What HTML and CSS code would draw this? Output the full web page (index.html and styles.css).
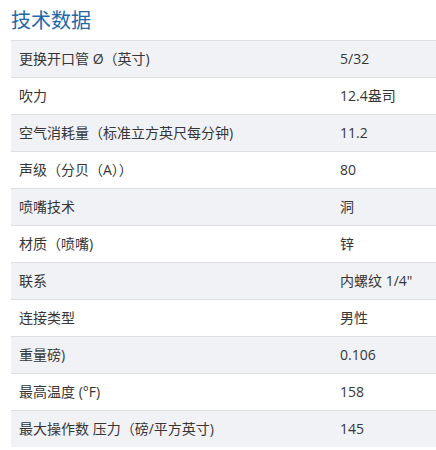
FILE: index.html
```html
<!DOCTYPE html>
<html lang="zh">
<head>
<meta charset="utf-8">
<link rel="stylesheet" href="styles.css">
</head>
<body>
<div class="wrap">
  <h2 class="title">技术数据</h2>
  <table class="specs">
    <tbody>
      <tr><td class="k">更换开口管 Ø（英寸)</td><td class="v">5/32</td></tr>
      <tr><td class="k">吹力</td><td class="v">12.4盎司</td></tr>
      <tr><td class="k">空气消耗量（标准立方英尺每分钟)</td><td class="v">11.2</td></tr>
      <tr><td class="k">声级（分贝（A））</td><td class="v">80</td></tr>
      <tr><td class="k">喷嘴技术</td><td class="v">洞</td></tr>
      <tr><td class="k">材质（喷嘴)</td><td class="v">锌</td></tr>
      <tr><td class="k">联系</td><td class="v">内螺纹 1/4"</td></tr>
      <tr><td class="k">连接类型</td><td class="v">男性</td></tr>
      <tr><td class="k">重量磅)</td><td class="v">0.106</td></tr>
      <tr><td class="k">最高温度 (°F)</td><td class="v">158</td></tr>
      <tr><td class="k">最大操作数 压力（磅/平方英寸)</td><td class="v">145</td></tr>
    </tbody>
  </table>
</div>
</body>
</html>
```
FILE: styles.css
```css
html, body {
  margin: 0;
  padding: 0;
  background: #ffffff;
}
body {
  font-family: "Open Sans", "Noto Sans CJK SC", sans-serif;
  color: #363636;
}
.wrap {
  padding: 6px 0 0 11px;
}
.title {
  margin: 0 0 6px 0;
  font-family: "Noto Sans CJK SC", sans-serif;
  font-weight: 400;
  font-size: 20px;
  line-height: 28px;
  color: #2467a8;
}
.specs {
  width: 425px;
  border-collapse: collapse;
  font-size: 14px;
}
.specs tr {
  border-top: 1px solid #dedfe3;
}
.specs tr:nth-child(odd) {
  background: #f1f2f6;
}
.specs td {
  height: 36px;
  padding: 0 0 0 8px;
  vertical-align: middle;
  line-height: 20px;
}
.specs td.v {
  width: 96px;
}
```
